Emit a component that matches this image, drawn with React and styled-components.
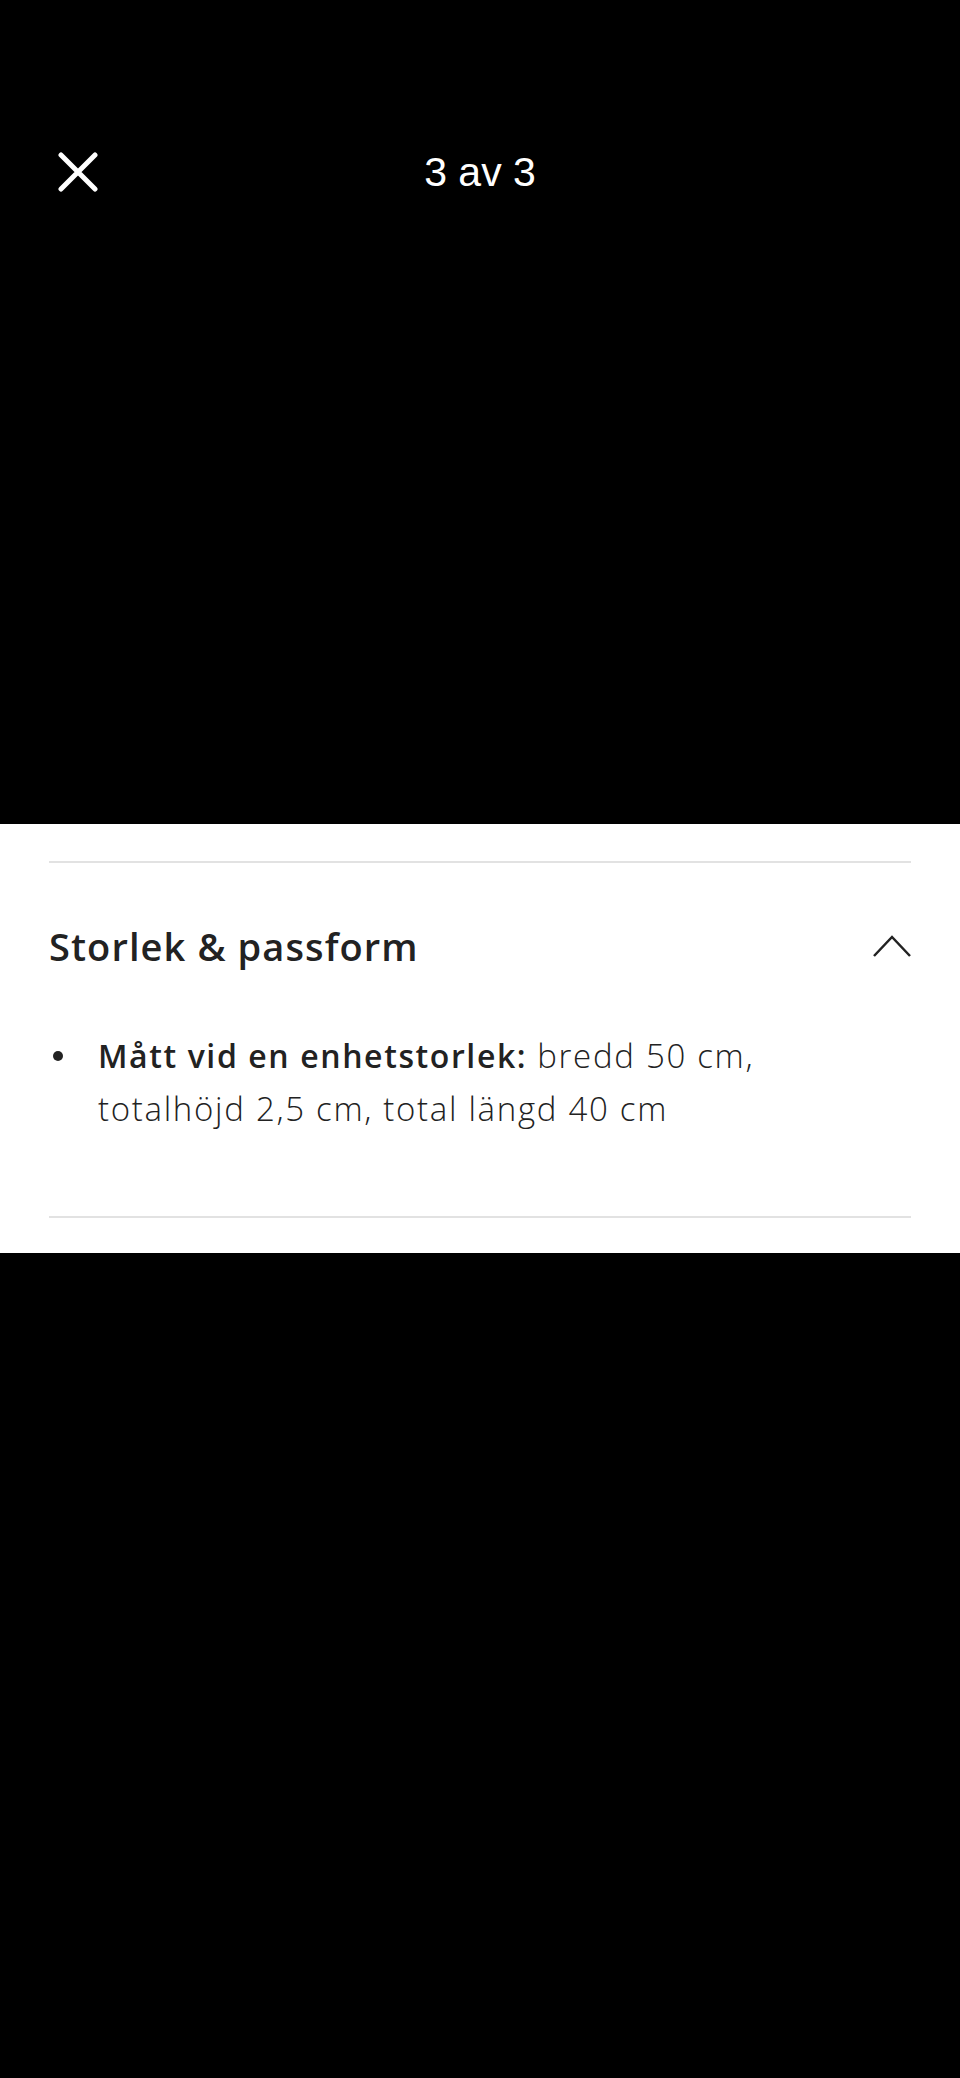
import React from 'react';
import styled, { createGlobalStyle } from 'styled-components';

const GlobalStyle = createGlobalStyle`
  html, body {
    margin: 0;
    padding: 0;
    background: #000;
  }
  * {
    box-sizing: border-box;
  }
`;

const Page = styled.div`
  width: 960px;
  min-height: 2078px;
  background: #000;
  display: flex;
  flex-direction: column;
`;

const Header = styled.header`
  position: relative;
  height: 344px;
  display: flex;
  align-items: center;
  justify-content: center;
`;

const CloseButton = styled.button`
  position: absolute;
  left: 58px;
  top: 152px;
  width: 40px;
  height: 40px;
  padding: 0;
  border: none;
  background: transparent;
  display: flex;
`;

const Counter = styled.h1`
  margin: 0;
  font-family: "Liberation Sans", Arial, sans-serif;
  font-weight: 400;
  font-size: 41px;
  color: #fff;
`;

const Stage = styled.div`
  height: 480px;
  background: #000;
`;

const Panel = styled.section`
  background: #fff;
  padding: 37px 49px 35px;
  display: flex;
  flex-direction: column;
`;

const Divider = styled.hr`
  margin: 0;
  border: none;
  height: 2px;
  background: #e2e2e2;
`;

const AccordionHead = styled.div`
  height: 166px;
  display: flex;
  align-items: center;
  justify-content: space-between;
`;

const Title = styled.h2`
  margin: 0;
  font-family: "Open Sans", "Noto Sans", sans-serif;
  font-weight: 600;
  font-size: 38px;
  letter-spacing: 1.1px;
  color: #222;
`;

const List = styled.ul`
  margin: 0 0 81px;
  padding: 0;
  list-style: none;
`;

const Item = styled.li`
  display: flex;
  font-family: "Open Sans", "Noto Sans", sans-serif;
  font-weight: 300;
  font-size: 33px;
  line-height: 53px;
  letter-spacing: 1.7px;
  color: #222;
`;

const Bullet = styled.span`
  flex: 0 0 49px;
  display: flex;
  align-items: center;
  height: 53px;
  &::before {
    content: '';
    width: 10px;
    height: 10px;
    margin-left: 4px;
    border-radius: 50%;
    background: #222;
  }
`;

const ItemText = styled.p`
  margin: 0;
  max-width: 760px;
`;

const Strong = styled.strong`
  font-weight: 600;
  font-size: 32px;
  letter-spacing: 1.6px;
  margin-right: 10px;
`;

function CloseIcon() {
  return (
    <svg width="40" height="40" viewBox="0 0 40 40">
      <path d="M3 3 L37 37 M37 3 L3 37" stroke="#fff" strokeWidth="5" strokeLinecap="round" fill="none" />
    </svg>
  );
}

function ChevronUp() {
  return (
    <svg width="38" height="22" viewBox="0 0 38 22">
      <polyline points="1,21 19,2 37,21" stroke="#222" strokeWidth="2.5" fill="none" />
    </svg>
  );
}

export default function App() {
  return (
    <Page>
      <GlobalStyle />
      <Header>
        <CloseButton aria-label="Stäng">
          <CloseIcon />
        </CloseButton>
        <Counter>3 av 3</Counter>
      </Header>
      <Stage />
      <Panel>
        <Divider />
        <AccordionHead>
          <Title>Storlek &amp; passform</Title>
          <ChevronUp />
        </AccordionHead>
        <List>
          <Item>
            <Bullet />
            <ItemText>
              <Strong>Mått vid en enhetstorlek:</Strong>
              <span>bredd 50 cm, totalhöjd 2,5 cm, total längd 40 cm</span>
            </ItemText>
          </Item>
        </List>
        <Divider />
      </Panel>
    </Page>
  );
}
